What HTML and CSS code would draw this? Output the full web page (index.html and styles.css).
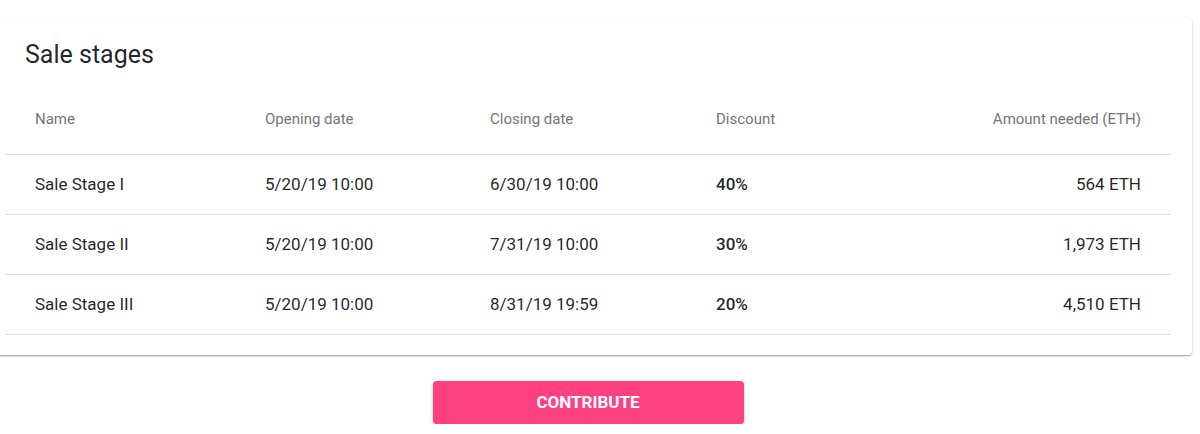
FILE: index.html
```html
<!DOCTYPE html>
<html lang="en">
<head>
<meta charset="utf-8">
<title>Sale stages</title>
<link rel="stylesheet" href="styles.css">
</head>
<body>
<div class="page">
  <section class="card">
    <h2 class="card-title">Sale stages</h2>
    <table class="stages">
      <colgroup>
        <col class="c-name"><col class="c-open"><col class="c-close"><col class="c-disc"><col class="c-amt">
      </colgroup>
      <thead>
        <tr>
          <th>Name</th>
          <th>Opening date</th>
          <th>Closing date</th>
          <th>Discount</th>
          <th class="num">Amount needed (ETH)</th>
        </tr>
      </thead>
      <tbody>
        <tr>
          <td>Sale Stage I</td>
          <td>5/20/19 10:00</td>
          <td>6/30/19 10:00</td>
          <td class="disc">40%</td>
          <td class="num">564 ETH</td>
        </tr>
        <tr>
          <td>Sale Stage II</td>
          <td>5/20/19 10:00</td>
          <td>7/31/19 10:00</td>
          <td class="disc">30%</td>
          <td class="num">1,973 ETH</td>
        </tr>
        <tr>
          <td>Sale Stage III</td>
          <td>5/20/19 10:00</td>
          <td>8/31/19 19:59</td>
          <td class="disc">20%</td>
          <td class="num">4,510 ETH</td>
        </tr>
      </tbody>
    </table>
  </section>
  <div class="actions">
    <button class="btn-contribute" type="button">Contribute</button>
  </div>
</div>
</body>
</html>
```

FILE: styles.css
```css
* { box-sizing: border-box; }
html, body { margin: 0; background: #fff; }
body {
  font-family: Roboto, "Noto Sans", Arial, sans-serif;
  color: rgba(0, 0, 0, 0.87);
  overflow: hidden;
}
.page {
  padding-top: 18px;
}
.card {
  margin-left: -16px;
  width: 1208px;
  background: #fff;
  border-radius: 4px;
  padding: 21px 21px 20px;
  box-shadow: 0 1px 3px 0 rgba(0,0,0,0.2), 0 1px 1px 0 rgba(0,0,0,0.14), 0 2px 1px -1px rgba(0,0,0,0.12);
}
.card-title {
  margin: 0 0 13px 20px;
  font-size: 25px;
  line-height: 32px;
  font-weight: 400;
  color: rgba(0, 0, 0, 0.87);
}
.stages {
  width: 100%;
  border-collapse: collapse;
  table-layout: fixed;
}
.c-name { width: 230px; }
.c-open { width: 225px; }
.c-close { width: 226px; }
.c-disc { width: 200px; }
.stages th,
.stages td {
  padding: 0 0 0 30px;
  text-align: left;
  border-bottom: 1px solid #e0e0e0;
  white-space: nowrap;
}
.stages th {
  height: 70px;
  font-size: 15px;
  font-weight: 400;
  color: #757575;
}
.stages td {
  height: 60px;
  font-size: 17px;
  color: rgba(0, 0, 0, 0.87);
}
.stages th.num,
.stages td.num {
  text-align: right;
  padding: 0 30px 0 0;
}
.stages td.disc {
  font-weight: 500;
}
.actions {
  margin-left: -16px;
  width: 1208px;
  display: flex;
  justify-content: center;
  margin-top: 26px;
}
.btn-contribute {
  width: 311px;
  height: 43px;
  padding: 0;
  border: none;
  border-radius: 4px;
  background: #ff4081;
  color: #fff;
  font-family: Roboto, "Noto Sans", Arial, sans-serif;
  font-size: 17px;
  font-weight: 700;
  line-height: 43px;
  text-transform: uppercase;
  box-shadow: 0 3px 1px -2px rgba(0,0,0,0.2), 0 2px 2px 0 rgba(0,0,0,0.14), 0 1px 5px 0 rgba(0,0,0,0.12);
  cursor: pointer;
}
```
